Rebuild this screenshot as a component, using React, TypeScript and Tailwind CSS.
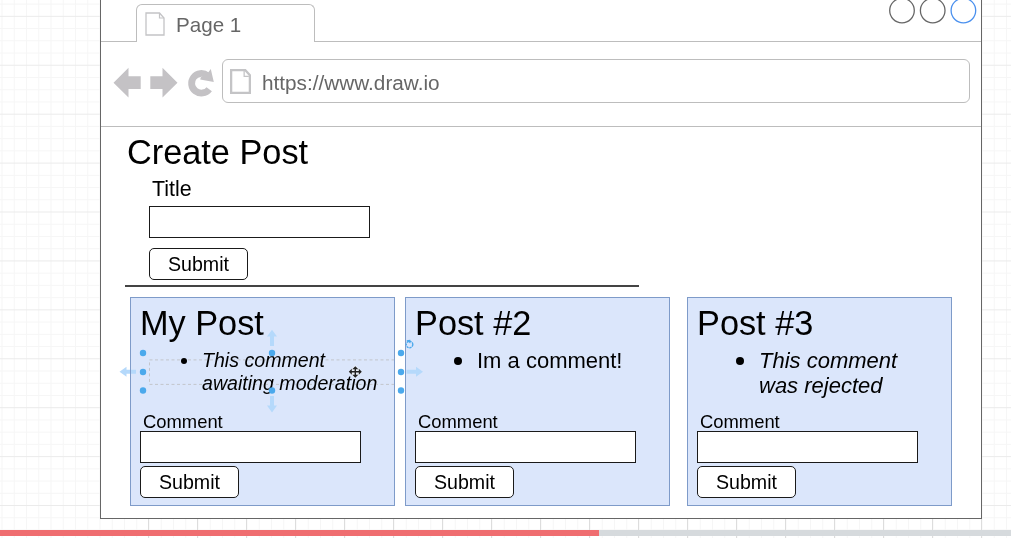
import React from "react";

type Post = {
  title: string;
  lines: string[];
  italic: boolean;
  small?: boolean;
};

const posts: Post[] = [
  { title: "My Post", lines: ["This comment", "awaiting moderation"], italic: true, small: true },
  { title: "Post #2", lines: ["Im a comment!"], italic: false },
  { title: "Post #3", lines: ["This comment", "was rejected"], italic: true },
];

const range = (n: number) => Array.from({ length: n }, (_, i) => i);

function CanvasGrid() {
  return (
    <svg className="absolute inset-0" width="1011" height="538" aria-hidden="true">
      {range(83).map((i) => (
        <rect key={`v${i}`} x={1.5 + i * 12.25} y="0" width="1" height="538" fill="#f6f6f6" />
      ))}
      {range(44).map((i) => (
        <rect key={`h${i}`} x="0" y={3.6 + i * 12.23} width="1011" height="1" fill={i % 4 === 1 ? "#ebebeb" : "#f6f6f6"} />
      ))}
      {range(18).map((i) => (
        <rect key={`b${i}`} x={148 + i * 49} y="519" width="1" height="19" fill="#dddddd" />
      ))}
    </svg>
  );
}

function PageIcon({ className, stroke, fold }: { className: string; stroke: number; fold: string }) {
  return (
    <svg className={className} viewBox="0 0 20 24" fill="none" stroke="#c4c4c6" strokeWidth={stroke} aria-hidden="true">
      <path d="M1 1H14.5L19 6V23H1Z" />
      <path d={fold} strokeWidth="1.2" />
    </svg>
  );
}

function TabStrip() {
  return (
    <div className="flex h-[42px] shrink-0">
      <div className="w-[35px] border-b border-[#bdbdbd]" />
      <div className="mt-[4px] flex w-[179px] items-center rounded-t-[6px] border-x border-t border-[#bdbdbd] pl-[8px]">
        <PageIcon className="h-[24px] w-[20px]" stroke={1.3} fold="M14.5 1V6H19" />
        <span className="ml-[11px] mt-[2px] text-[20.6px] leading-6 text-[#666]">Page 1</span>
      </div>
      <div className="relative flex-1 border-b border-[#bdbdbd]">
        <svg className="absolute -top-[3px] right-[4px]" width="90" height="28" viewBox="0 0 90 28" fill="none" strokeWidth="1.3" aria-hidden="true">
          <circle cx="15" cy="13.6" r="12.3" stroke="#666" />
          <circle cx="45.7" cy="13.6" r="12.3" stroke="#666" />
          <circle cx="76.4" cy="13.6" r="12.3" stroke="#4a90ee" />
        </svg>
      </div>
    </div>
  );
}

function AddressBar() {
  return (
    <div className="flex h-[85px] shrink-0 border-b border-[#bdbdbd] pl-[11px] pt-[17px]">
      <svg className="h-[44px] w-[110px] shrink-0" viewBox="0 0 110 44" fill="#c4c2c5" aria-hidden="true">
        <path d="M1.5 23.7 16.5 8.7V17.3H28.7V30H16.5V38.5Z" />
        <path d="M65.5 23.7 50.5 8.7V17.3H38.3V30H50.5V38.5Z" />
        <path d="M97.2 30.2A9.8 9.8 0 1 1 95.5 16.6" fill="none" stroke="#c4c2c5" strokeWidth="6.8" />
        <path d="M98.8 10 101.8 23 88.2 20.4 88.8 18.2 95 15Z" />
      </svg>
      <div className="flex h-[44px] w-[748px] items-center rounded-[6px] border border-[#bdbdbd] pl-[7px]">
        <PageIcon className="h-[25px] w-[21px]" stroke={2.2} fold="M13.5 2V7H18" />
        <span className="ml-[11px] mt-[3px] text-[20.75px] leading-6 text-[#666]">https://www.draw.io</span>
      </div>
    </div>
  );
}

function SubmitButton() {
  return (
    <button className="flex h-[32px] w-[99px] items-center justify-center rounded-[5px] border border-[#1a1a1a] bg-white text-[19.6px] leading-6">
      Submit
    </button>
  );
}

function TextField({ label }: { label: string }) {
  return <input aria-label={label} className="block h-[32px] w-[221px] border border-[#1a1a1a] bg-white" />;
}

function CreatePost() {
  return (
    <section className="flex h-[158px] shrink-0 flex-col pl-[26px] pt-[5px]">
      <h1 className="text-[34.3px] leading-10">Create Post</h1>
      <div className="flex flex-col items-start pl-[22px] pt-[5px]">
        <label className="pl-[3px] text-[21.4px] leading-6">Title</label>
        <div className="mt-[5px]">
          <TextField label="Title" />
        </div>
        <div className="mt-[10px]">
          <SubmitButton />
        </div>
      </div>
      <div className="-ml-[2px] mt-[5px] h-[1.5px] w-[514px] shrink-0 bg-[#444]" />
    </section>
  );
}

function PostCard({ post }: { post: Post }) {
  const lineStyle = post.small ? "pt-[5.5px] text-[19.6px] leading-[23.5px]" : "pt-[4.5px] text-[22px] leading-[25.5px]";
  return (
    <article className="flex h-[209px] w-[265px] flex-col items-start border border-[#7e9bc9] bg-[#dbe6fb] pl-[9px] pt-[5px]">
      <h2 className="text-[34.3px] leading-10">{post.title}</h2>
      <div className="h-[68px]">
        <div className={`flex whitespace-nowrap ${lineStyle}`}>
          <div className={post.small ? "flex w-[62px] pl-[41px] pt-[9.5px]" : "flex w-[62px] pl-[39px] pt-[9.5px]"}>
            <span className={post.small ? "size-[6px] rounded-full bg-black" : "size-[8px] rounded-full bg-black"} />
          </div>
          <div className={post.italic ? "italic" : ""}>
            {post.lines.map((line) => (
              <div key={line}>{line}</div>
            ))}
          </div>
        </div>
      </div>
      <label className="mt-px pl-[3px] text-[18.4px] leading-[19px]">Comment</label>
      <TextField label="Comment" />
      <div className="mt-[3px]">
        <SubmitButton />
      </div>
    </article>
  );
}

function Selection() {
  const handles = [
    [143, 353], [272, 353], [401, 353],
    [143, 372], [401, 372],
    [143, 390.5], [272, 390.5], [401, 390.5],
  ];
  return (
    <svg className="pointer-events-none absolute left-0 top-0 mix-blend-darken" width="1011" height="538" aria-hidden="true">
      <rect x="149.5" y="359.9" width="245" height="24.5" fill="none" stroke="#c3c5cb" strokeDasharray="3 2.5" />
      <g fill="#b5d9fb">
        <path d="M272 329.7 277 336.5H274V346H270V336.5H267Z" />
        <path d="M272 412.5 277 405.5H274V396H270V405.5H267Z" />
        <path d="M119.5 371.8 126.5 366.8V369.8H136V373.8H126.5V376.8Z" />
        <path d="M423 371.8 416 366.8V369.8H406.5V373.8H416V376.8Z" />
      </g>
    </svg>
  );
}

function Handles() {
  const handles = [
    [143, 353], [272, 353], [401, 353],
    [143, 372], [401, 372],
    [143, 390.5], [272, 390.5], [401, 390.5],
  ];
  return (
    <svg className="pointer-events-none absolute left-0 top-0" width="1011" height="538" aria-hidden="true">
      {handles.map(([x, y]) => (
        <circle key={`${x}-${y}`} cx={x} cy={y} r="3.2" fill="#4ba9ec" />
      ))}
      <circle cx="409.5" cy="344.5" r="3.3" fill="none" stroke="#4ba9ec" strokeWidth="1.4" strokeDasharray="2.2 .8" />
      <path d="M406.3 340.2 410.3 339.8 410.3 343.6 408.8 342.3Z" fill="#4ba9ec" />
      <path d="M355.3 365.2 362 371.9 355.3 378.6 348.6 371.9Z" fill="#eef1f6" opacity=".8" />
      <path
        d="M355 366.5 358 369.5H355.7V371.3H358.5V369L361.5 372 358.5 375V372.7H355.7V375H358L355 378 352 375H354.3V372.7H351.5V375L348.5 372 351.5 369V371.3H354.3V369.5H352Z"
        transform="translate(.3 -.2)"
        fill="#222"
      />
    </svg>
  );
}

export default function App() {
  return (
    <main className="relative h-[538px] w-[1011px] overflow-hidden bg-white font-['Liberation_Sans',sans-serif] text-black">
      <CanvasGrid />
      <div className="relative flex h-[530px] flex-col pl-[100px]">
        <div className="flex h-[519px] w-[882px] flex-col border-x border-b border-[#666] bg-white">
          <TabStrip />
          <AddressBar />
          <CreatePost />
          <section className="flex pl-[29px] pt-[12px]">
            <PostCard post={posts[0]} />
            <div className="ml-[10px] mr-[17px]">
              <PostCard post={posts[1]} />
            </div>
            <PostCard post={posts[2]} />
          </section>
        </div>
      </div>
      <div className="relative flex h-[6px]">
        <div className="w-[599px] bg-[#ef6d70]" />
        <div className="flex-1 bg-[#d6dadd]" />
      </div>
      <Selection />
      <Handles />
    </main>
  );
}
